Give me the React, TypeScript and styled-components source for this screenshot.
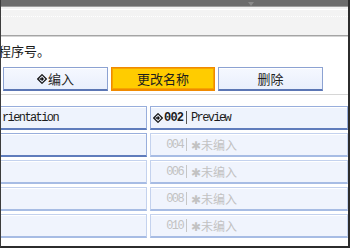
import React from "react";
import styled, { createGlobalStyle } from "styled-components";

const Global = createGlobalStyle`
  html, body { margin: 0; padding: 0; background: #fff; }
  body { font-family: "Noto Sans CJK SC", "Noto Sans", sans-serif; }
`;

const Frame = styled.div`
  width: 350px;
  height: 248px;
  box-sizing: border-box;
  border-left: 1px solid #3c3c3c;
  border-right: 2px solid #2c2c2c;
  border-bottom: 2px solid #2c2c2c;
  background: #fff;
  overflow: hidden;
  display: flex;
  flex-direction: column;
`;

const TopBar = styled.div`
  height: 6px;
  background: #6c6c6c;
  border-bottom: 1px solid #9c9c9c;
  display: flex;
  justify-content: flex-start;
  padding-left: 246px;
`;

const Notch = styled.svg`
  width: 8px;
  height: 6px;
`;

const Header = styled.div`
  height: 29px;
  background: #f3f3f3;
  border-bottom: 1px solid #a4a4a4;
  box-shadow: 0 1px 0 #d4d4d4;
  display: flex;
  flex-direction: column;
  gap: 5px;
  padding-top: 2px;
  box-sizing: border-box;
  flex: none;
`;

const HeaderLine = styled.div<{ $dotted?: boolean }>`
  height: 1px;
  border-top: 1px ${(p) => (p.$dotted ? "dotted" : "solid")} #ffffff;
`;

const Message = styled.div`
  margin-top: 7px;
  margin-left: -3px;
  font-size: 13px;
  line-height: 16px;
  color: #1a1a1a;
  white-space: nowrap;
`;

const ButtonRow = styled.div`
  display: flex;
  gap: 3px;
  margin-top: 8px;
  padding-left: 2px;
`;

const Button = styled.div<{ $w: number; $active?: boolean }>`
  width: ${(p) => p.$w}px;
  height: 24px;
  box-sizing: border-box;
  display: flex;
  align-items: center;
  justify-content: center;
  gap: 1px;
  font-size: 13px;
  color: #1e1e1e;
  border: 1px solid ${(p) => (p.$active ? "#f08a00" : "#8ca2d2")};
  border-bottom: 2px solid ${(p) => (p.$active ? "#f08a00" : "#5b76b4")};
  box-shadow: ${(p) => (p.$active ? "inset 0 0 0 1px #f6a400" : "inset 0 1px 0 #ffffff")};
  background: ${(p) => (p.$active ? "#ffcc00" : "linear-gradient(#f5f8ff, #e9effc)")};
`;

const Separator = styled.div`
  margin-top: 3px;
  height: 1px;
  background: #d6d6d6;
`;

const List = styled.div`
  margin-top: 11px;
  margin-left: -13px;
  display: grid;
  grid-template-columns: 159px 198px;
  grid-auto-rows: 24px;
  column-gap: 3px;
  row-gap: 3px;
`;

const Cell = styled.div<{ $state: "on" | "off" }>`
  box-sizing: border-box;
  display: flex;
  align-items: center;
  background: ${(p) => (p.$state === "on" ? "#eef3fd" : "#f0f4fd")};
  border: 1px solid ${(p) => (p.$state === "on" ? "#98aedc" : "#c4d2ee")};
  border-bottom: 2px solid ${(p) => (p.$state === "on" ? "#5f7cbc" : "#a7bce4")};
  box-shadow: inset 0 1px 0 #ffffff;
  font-family: "Liberation Mono", monospace;
  font-size: 12px;
  letter-spacing: -1.6px;
  color: ${(p) => (p.$state === "on" ? "#1c1c1c" : "#c2c2c2")};
  white-space: nowrap;
`;

const LeftLabel = styled.span`
  padding-left: 13px;
`;

const NumBox = styled.span<{ $bold?: boolean }>`
  width: 32px;
  flex: none;
  display: flex;
  align-items: center;
  justify-content: flex-end;
  gap: 1px;
  font-weight: ${(p) => (p.$bold ? 700 : 400)};
  font-size: 12px;
  letter-spacing: ${(p) => (p.$bold ? "-0.9px" : "-1.6px")};
`;

const Bar = styled.span<{ $dark?: boolean }>`
  width: 1px;
  height: 13px;
  margin: 0 4px 0 3px;
  background: ${(p) => (p.$dark ? "#555" : "#c6c6c6")};
  flex: none;
`;

const Label = styled.span<{ $cjk?: boolean }>`
  font-family: ${(p) =>
    p.$cjk ? `"Noto Sans CJK SC", sans-serif` : `"Liberation Mono", monospace`};
  font-size: 12px;
  letter-spacing: ${(p) => (p.$cjk ? "0" : "-1.6px")};
`;

const Icon = styled.svg`
  width: 10px;
  height: 10px;
  flex: none;
`;

const EntryIcon = () => (
  <Icon viewBox="0 0 10 10">
    <path d="M5 0.7 L9.3 5 L5 9.3 L0.7 5 Z" fill="none" stroke="#111" strokeWidth="1.2" />
    <path d="M2.6 4.2 H4.6 V2.6 L7 5 L4.6 7.4 V5.8 H2.6 Z" fill="#111" />
  </Icon>
);

const rows = [
  { left: "rientation", leftOn: true, num: "002", label: "Preview", on: true },
  { left: "", leftOn: true, num: "004", label: "✱未编入", on: false },
  { left: "", leftOn: false, num: "006", label: "✱未编入", on: false },
  { left: "", leftOn: false, num: "008", label: "✱未编入", on: false },
  { left: "", leftOn: false, num: "010", label: "✱未编入", on: false },
];

export default function App() {
  return (
    <>
      <Global />
      <Frame>
        <TopBar>
          <Notch viewBox="0 0 8 6">
            <path d="M1 2 H7 L4 6 Z" fill="#8a8a8a" />
          </Notch>
        </TopBar>
        <Header>
          <HeaderLine />
          <HeaderLine $dotted />
        </Header>
        <Message>程序号。</Message>
        <ButtonRow>
          <Button $w={105}>
            <EntryIcon />
            编入
          </Button>
          <Button $w={104} $active>
            更改名称
          </Button>
          <Button $w={105}>删除</Button>
        </ButtonRow>
        <Separator />
        <List>
          {rows.map((r, i) => (
            <React.Fragment key={i}>
              <Cell $state={r.leftOn ? "on" : "off"}>
                <LeftLabel>{r.left}</LeftLabel>
              </Cell>
              <Cell $state={r.on ? "on" : "off"}>
                <NumBox $bold={r.on}>
                  {r.on && <EntryIcon />}
                  {r.num}
                </NumBox>
                <Bar $dark={r.on} />
                <Label $cjk={!r.on}>{r.label}</Label>
              </Cell>
            </React.Fragment>
          ))}
        </List>
      </Frame>
    </>
  );
}
